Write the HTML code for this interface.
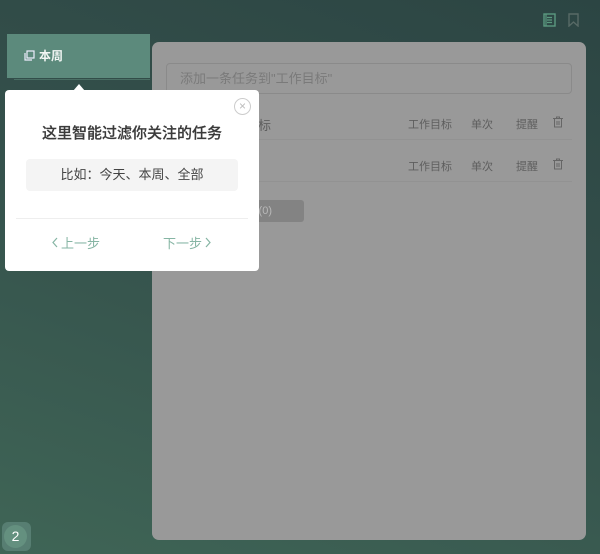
<!DOCTYPE html>
<html><head><meta charset="utf-8"><style>
*{margin:0;padding:0;box-sizing:border-box}
body{width:600px;height:554px;overflow:hidden;font-family:"Liberation Sans","Noto Sans CJK SC",sans-serif;background:linear-gradient(200deg,#2c4543 0%,#34504b 45%,#3f6556 100%);position:relative}
.abs{position:absolute}
.side{left:7px;top:34px;width:143px;height:44px;background:#5c8a7c;color:#f2f6f4;font-size:12px;font-weight:bold;line-height:44px;padding-left:17px}
.panel{left:152px;top:42px;width:434px;height:498px;background:#999;border-radius:7px}
.input{left:166px;top:63px;width:406px;height:31px;border:1px solid #8a8a8a;border-radius:4px;color:#7a7a7a;font-size:13px;line-height:29px;padding-left:13px}
.row{font-size:11px;color:#5e5e5e}
.sep{height:1px;background:#929292;left:166px;width:406px}
.pop{left:5px;top:90px;width:254px;height:181px;background:#fff;border-radius:4px}
.title{left:0;width:254px;top:32px;text-align:center;font-size:15px;color:#3a3a3a;font-weight:500;-webkit-text-stroke:0.2px #3a3a3a}
.box{left:21px;top:69px;width:212px;height:32px;background:#f4f4f4;border-radius:4px;text-align:center;line-height:32px;font-size:13px;color:#444}
.btn{font-size:13px;color:#86b5a4;top:143px;display:flex;align-items:center;gap:3px}
</style></head><body>
<svg class="abs" style="left:543px;top:13px" width="13" height="14" viewBox="0 0 13 14"><rect x="1" y="1" width="11" height="12" fill="none" stroke="#5b9a80" stroke-width="1.4"/><path d="M4 4.5h5M4 7h5M4 9.5h5M3 1v12" stroke="#5b9a80" stroke-width="1.2"/></svg>
<svg class="abs" style="left:568px;top:13px" width="11" height="14" viewBox="0 0 11 14"><path d="M1 1h9v12l-4.5-4L1 13z" fill="none" stroke="#586a66" stroke-width="1.4"/></svg>
<div class="abs side"><svg style="position:absolute;left:17px;top:16px" width="11" height="11" viewBox="0 0 11 11"><rect x="3" y="1" width="7" height="7" fill="none" stroke="#eef" stroke-width="1.2"/><path d="M1 3v7h7" fill="none" stroke="#eef" stroke-width="1.2"/></svg><span style="margin-left:15px">本周</span></div>
<div class="abs" style="left:14px;top:79px;width:136px;height:1px;background:#4a6e64"></div>
<div class="abs panel"></div>
<div class="abs input">添加一条任务到"工作目标"</div>
<div class="abs row" style="left:258px;top:115px;font-size:13px">标</div>
<div class="abs row" style="left:408px;top:116px">工作目标</div><div class="abs row" style="left:471px;top:116px">单次</div><div class="abs row" style="left:516px;top:116px">提醒</div>
<div class="abs row" style="left:408px;top:158px">工作目标</div><div class="abs row" style="left:471px;top:158px">单次</div><div class="abs row" style="left:516px;top:158px">提醒</div>
<svg class="abs" style="left:553px;top:116px" width="10" height="12" viewBox="0 0 10 12"><path d="M0 2.5h10M3.5 2.5V1h3v1.5M1.5 2.5v8.5h7V2.5M4 5v4M6 5v4" fill="none" stroke="#666" stroke-width="1"/></svg>
<svg class="abs" style="left:553px;top:158px" width="10" height="12" viewBox="0 0 10 12"><path d="M0 2.5h10M3.5 2.5V1h3v1.5M1.5 2.5v8.5h7V2.5M4 5v4M6 5v4" fill="none" stroke="#666" stroke-width="1"/></svg>
<div class="abs sep" style="top:139px"></div><div class="abs sep" style="top:181px"></div>
<div class="abs" style="left:200px;top:200px;width:104px;height:22px;background:#838383;border-radius:3px;color:#b8b8b8;font-size:11px;line-height:22px;text-align:right;padding-right:32px">(0)</div>
<div class="abs" style="left:73px;top:84px;width:0;height:0;border-left:6px solid transparent;border-right:6px solid transparent;border-bottom:7px solid #fff"></div>
<div class="abs pop">
<div class="abs" style="left:229px;top:8px;width:17px;height:17px;border:1.5px solid #ccc;border-radius:50%;color:#bbb;font-size:12px;line-height:14px;text-align:center">×</div>
<div class="abs title">这里智能过滤你关注的任务</div>
<div class="abs box">比如：今天、本周、全部</div>
<div class="abs" style="left:11px;top:128px;width:232px;height:1px;background:#eee"></div>
<div class="abs btn" style="left:47px"><svg width="6" height="11" viewBox="0 0 6 11"><path d="M5 1L1 5.5 5 10" fill="none" stroke="#86b5a4" stroke-width="1.2"/></svg>上一步</div>
<div class="abs btn" style="left:158px">下一步<svg width="6" height="11" viewBox="0 0 6 11"><path d="M1 1l4 4.5L1 10" fill="none" stroke="#86b5a4" stroke-width="1.2"/></svg></div>
</div>
<div class="abs" style="left:2px;top:522px;width:29px;height:29px;background:#577e72;border-radius:6px"></div>
<div class="abs" style="left:4px;top:525px;width:23px;height:23px;background:#64907f;border-radius:50%;color:#fff;font-size:14px;line-height:23px;text-align:center">2</div>
</body></html>
